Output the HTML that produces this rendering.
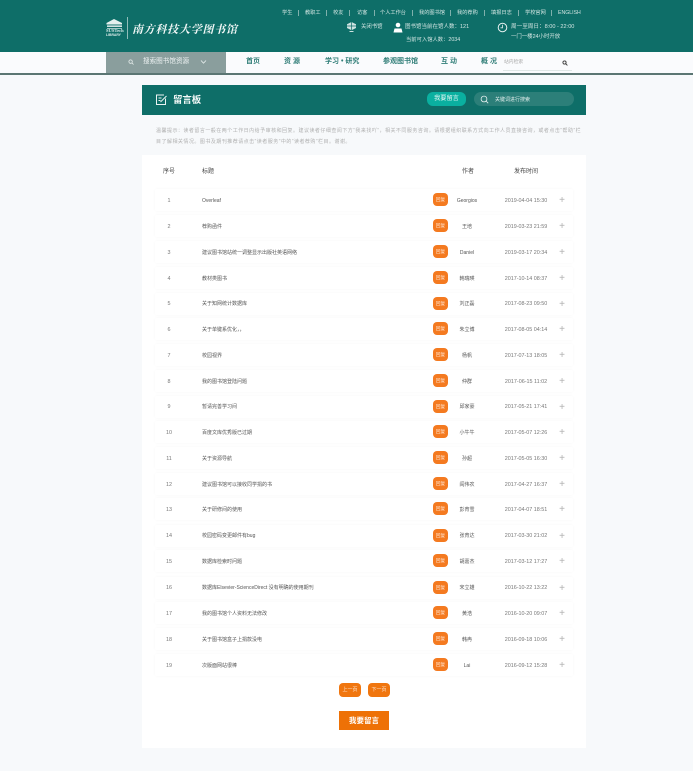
<!DOCTYPE html>
<html lang="zh-CN"><head><meta charset="utf-8"><title>留言板</title>
<style>
html,body{margin:0;padding:0}
body{width:693px;height:771px;position:relative;overflow:hidden;background:#f7f9fb;font-family:"Liberation Sans","Noto Sans CJK SC",sans-serif;color:#666}
.a{position:absolute;white-space:nowrap}
.w{color:#d3e6e3;font-size:5.2px;line-height:8px}
.sep{position:absolute;top:10px;width:1px;height:6px;background:#7fb0ac}
.nav{position:absolute;top:57px;font-size:7px;line-height:10px;font-weight:700;color:#2f7d77;white-space:nowrap}
.row{position:absolute;left:155px;width:418px;height:22px;background:#fff;box-shadow:0 0 3px rgba(20,40,60,.03);border-radius:2px}
.row span{position:absolute;top:7.800px;line-height:8px;font-size:5px;white-space:nowrap;color:#666}
.row .n{left:0;width:28px;text-align:center;color:#777;font-size:5.400px}
.row .t{left:47px;color:#555}
.row .b{left:278px;top:4px;width:15px;height:13px;line-height:13px;background:#f47a20;border-radius:4px;color:#ffe9d8;text-align:center;font-size:4.600px}
.row .u{left:282px;width:60px;text-align:center;color:#555}
.row .d{left:333px;width:76px;text-align:center;font-size:5.400px;color:#777}
.row .p{left:402px;width:10px;top:7px;text-align:center;font-size:10px;line-height:10px;color:#b0b0b0}
.th{position:absolute;top:167.500px;font-size:6px;line-height:8px;color:#444;white-space:nowrap}
.pg{position:absolute;top:683px;width:22px;height:14px;line-height:14px;background:#f0760f;border-radius:4px;color:#ffe9d8;font-size:5px;text-align:center}
.note{position:absolute;left:156px;font-size:5px;letter-spacing:.48px;line-height:8px;color:#b0b0b0;white-space:nowrap}
</style></head><body>

<div class="a" style="left:0;top:0;width:693px;height:52px;background:#0e6e68"></div>
<svg class="a" style="left:105px;top:18px" width="20" height="20" viewBox="0 0 20 20"><path d="M1.500 5 L9 1 L17 5 L17 6.500 L1.500 6.500Z" fill="#e4f0ee"/><path d="M2 7.500h15v1.300H2z" fill="#fff"/><path d="M2 10h15v1H2z" fill="#cfe3e1" opacity=".75"/></svg>
<div class="a" style="left:106px;top:28px;font-size:4.600px;line-height:5px;color:#dcecea;font-family:'Liberation Serif',serif;font-weight:700">SUSTech</div>
<div class="a" style="left:106px;top:32.500px;font-size:3.400px;line-height:4px;color:#dcecea;font-weight:700">LIBRARY</div>
<div class="a" style="left:127px;top:17px;width:1px;height:22px;background:#8fbdb9"></div>
<div class="a" style="left:132px;top:21.500px;font-size:11px;line-height:15px;letter-spacing:.75px;color:#f2f8f7;font-weight:700;font-style:italic;font-family:'Noto Serif CJK SC',serif">南方科技大学图书馆</div>

<div class="a w" style="left:282px;top:9px">学生</div><div class="sep" style="left:298px"></div>
<div class="a w" style="left:305px;top:9px">教职工</div><div class="sep" style="left:326px"></div>
<div class="a w" style="left:333px;top:9px">校友</div><div class="sep" style="left:349px"></div>
<div class="a w" style="left:357px;top:9px">访客</div><div class="sep" style="left:374px"></div>
<div class="a w" style="left:380px;top:9px">个人工作台</div><div class="sep" style="left:412px"></div>
<div class="a w" style="left:419px;top:9px">我的图书馆</div><div class="sep" style="left:450px"></div>
<div class="a w" style="left:457px;top:9px">我的荐购</div><div class="sep" style="left:484px"></div>
<div class="a w" style="left:491px;top:9px">填报日志</div><div class="sep" style="left:518px"></div>
<div class="a w" style="left:525px;top:9px">学校官网</div><div class="sep" style="left:551px"></div>
<div class="a w" style="left:558px;top:9px">ENGLISH</div>

<svg class="a" style="left:346px;top:21px" width="11" height="12" viewBox="0 0 11 12"><path d="M5.500 1 L10 3.200 L10 7 L5.500 9.300 L1 7 L1 3.200Z" fill="#cfe3e1"/><path d="M1 5h9M5.500 1v8.300" stroke="#0e6e68" stroke-width=".7"/><path d="M3.500 10.500h4" stroke="#cfe3e1"/></svg>
<div class="a w" style="left:361px;top:23px;font-size:5.400px">关闭书馆</div>
<svg class="a" style="left:393px;top:22px" width="10" height="11" viewBox="0 0 10 11"><circle cx="5" cy="3" r="2.300" fill="#fff"/><path d="M.5 10.500 L1.500 6.500 L8.500 6.500 L9.500 10.500Z" fill="#fff"/></svg>
<div class="a w" style="left:405px;top:23px;font-size:5.500px">图书馆当前在馆人数：121</div>
<div class="a w" style="left:406px;top:36px;font-size:5.300px">当前可入馆人数：2034</div>
<svg class="a" style="left:497px;top:22px" width="11" height="11" viewBox="0 0 11 11"><circle cx="5.500" cy="5.500" r="4.300" fill="none" stroke="#e6f1f0" stroke-width="1"/><path d="M5.500 2.800V5.800H3.500" fill="none" stroke="#e6f1f0" stroke-width=".8"/></svg>
<div class="a w" style="left:511px;top:23px;font-size:5.600px">周一至周日：8:00 - 22:00</div>
<div class="a w" style="left:511px;top:33px;font-size:5.400px">一门一楼24小时开放</div>

<div class="a" style="left:0;top:52px;width:693px;height:21px;background:#fafbfd"></div>
<div class="a" style="left:0;top:73px;width:693px;height:2px;background:#5b7673"></div>
<div class="a" style="left:106px;top:52px;width:120px;height:21px;background:#8a9e9d"></div>
<svg class="a" style="left:128px;top:59px" width="6" height="6" viewBox="0 0 6 6"><circle cx="2.600" cy="2.600" r="1.700" fill="none" stroke="#e8efee" stroke-width=".8"/><path d="M4 4 5.500 5.500" stroke="#e8efee" stroke-width=".8"/></svg>
<div class="a" style="left:143px;top:57px;font-size:6.600px;line-height:10px;color:#eef3f3">搜索图书馆资源</div>
<svg class="a" style="left:200px;top:59px" width="7" height="6" viewBox="0 0 7 6"><path d="M1 1.500 3.500 4.200 6 1.500" fill="none" stroke="#e8efee" stroke-width=".8"/></svg>

<div class="nav" style="left:246px">首页</div>
<div class="nav" style="left:284px">资 源</div>
<div class="nav" style="left:325px">学习 • 研究</div>
<div class="nav" style="left:383px">参观图书馆</div>
<div class="nav" style="left:441px">互 动</div>
<div class="nav" style="left:481px">概 况</div>
<div class="a" style="left:504px;top:59px;font-size:4.800px;line-height:8px;color:#aaa">站内检索</div>
<svg class="a" style="left:562px;top:60px" width="6" height="6" viewBox="0 0 6 6"><circle cx="2.500" cy="2.500" r="1.600" fill="none" stroke="#333" stroke-width=".9"/><path d="M3.800 3.800 5.400 5.400" stroke="#333" stroke-width=".9"/></svg>
<div class="a" style="left:503px;top:70px;width:69px;height:1px;background:#dfe7e6"></div>

<div class="a" style="left:142px;top:85px;width:444px;height:30px;background:#0e6e68"></div>
<svg class="a" style="left:155px;top:93px" width="13" height="13" viewBox="0 0 13 13"><path d="M10.500 5.500V11.500H1.500V2H9" fill="none" stroke="#eaf3f2" stroke-width="1"/><path d="M3.500 5h3M3.500 7.500h2M5.500 9 11.500 3" fill="none" stroke="#eaf3f2" stroke-width="1"/></svg>
<div class="a" style="left:173px;top:93px;font-size:9.400px;line-height:13px;font-weight:700;color:#f4faf9">留言板</div>
<div class="a" style="left:427px;top:92px;width:39px;height:14px;line-height:14px;border-radius:6px;background:#0ab0a0;color:#e6f8f5;font-size:6.200px;text-align:center">我要留言</div>
<div class="a" style="left:474px;top:92px;width:100px;height:14px;border-radius:7px;background:#2c7f79"></div>
<svg class="a" style="left:480px;top:95px" width="9" height="9" viewBox="0 0 9 9"><circle cx="4" cy="4" r="2.900" fill="none" stroke="#e6f1f0" stroke-width=".8"/><path d="M6 6 8.200 8.200" stroke="#e6f1f0" stroke-width=".8"/></svg>
<div class="a" style="left:495px;top:96px;font-size:5px;line-height:8px;color:#e4efee">关键词进行搜索</div>

<div class="note" style="top:127px">温馨提示：读者留言一般在两个工作日内给予审核和回复。建议读者仔细查阅下方“我来找吖”，相关不同服务咨询。请根据组织联系方式向工作人员直接咨询，或者点击“帮助”栏</div>
<div class="note" style="top:138px">目了解相关情况。图书及期刊推荐请点击“读者服务”中的“读者荐购”栏目。谢谢。</div>

<div class="a" style="left:142px;top:155px;width:444px;height:593px;background:#fff"></div>
<div class="th" style="left:163px">序号</div>
<div class="th" style="left:202px">标题</div>
<div class="th" style="left:462px">作者</div>
<div class="th" style="left:514px">发布时间</div>

<div class="row" style="top:189px"><span class="n">1</span><span class="t">Overleaf</span><span class="b">回复</span><span class="u">Georgios</span><span class="d">2019-04-04 15:30</span><span class="p">+</span></div>
<div class="row" style="top:215px"><span class="n">2</span><span class="t">荐购函件</span><span class="b">回复</span><span class="u">王培</span><span class="d">2019-03-23 21:59</span><span class="p">+</span></div>
<div class="row" style="top:241px"><span class="n">3</span><span class="t">建议图书馆站统一调整显示出版社英语网络</span><span class="b">回复</span><span class="u">Daniel</span><span class="d">2019-03-17 20:34</span><span class="p">+</span></div>
<div class="row" style="top:267px"><span class="n">4</span><span class="t">教材类图书</span><span class="b">回复</span><span class="u">韩瑞瑛</span><span class="d">2017-10-14 08:37</span><span class="p">+</span></div>
<div class="row" style="top:292.500px"><span class="n">5</span><span class="t">关于知网统计数据库</span><span class="b">回复</span><span class="u">刘正磊</span><span class="d">2017-08-23 09:50</span><span class="p">+</span></div>
<div class="row" style="top:318px"><span class="n">6</span><span class="t">关于单键系优化，，</span><span class="b">回复</span><span class="u">朱立博</span><span class="d">2017-08-05 04:14</span><span class="p">+</span></div>
<div class="row" style="top:344px"><span class="n">7</span><span class="t">校园视界</span><span class="b">回复</span><span class="u">杨帆</span><span class="d">2017-07-13 18:05</span><span class="p">+</span></div>
<div class="row" style="top:370px"><span class="n">8</span><span class="t">我的图书馆登陆问题</span><span class="b">回复</span><span class="u">仲群</span><span class="d">2017-06-15 11:02</span><span class="p">+</span></div>
<div class="row" style="top:395.500px"><span class="n">9</span><span class="t">暂请完善学习间</span><span class="b">回复</span><span class="u">邱家豪</span><span class="d">2017-05-21 17:41</span><span class="p">+</span></div>
<div class="row" style="top:421px"><span class="n">10</span><span class="t">百度文库优秀版已过期</span><span class="b">回复</span><span class="u">小牛牛</span><span class="d">2017-05-07 12:26</span><span class="p">+</span></div>
<div class="row" style="top:447px"><span class="n">11</span><span class="t">关于资源导航</span><span class="b">回复</span><span class="u">孙超</span><span class="d">2017-05-05 16:30</span><span class="p">+</span></div>
<div class="row" style="top:473px"><span class="n">12</span><span class="t">建议图书馆可以接收同学捐的书</span><span class="b">回复</span><span class="u">阎伟农</span><span class="d">2017-04-27 16:37</span><span class="p">+</span></div>
<div class="row" style="top:498px"><span class="n">13</span><span class="t">关于研修间的使用</span><span class="b">回复</span><span class="u">彭育雪</span><span class="d">2017-04-07 18:51</span><span class="p">+</span></div>
<div class="row" style="top:524.500px"><span class="n">14</span><span class="t">校园密码变更邮件有bug</span><span class="b">回复</span><span class="u">张育达</span><span class="d">2017-03-30 21:02</span><span class="p">+</span></div>
<div class="row" style="top:550px"><span class="n">15</span><span class="t">数据库检索时问题</span><span class="b">回复</span><span class="u">胡嘉杰</span><span class="d">2017-03-12 17:27</span><span class="p">+</span></div>
<div class="row" style="top:576.500px"><span class="n">16</span><span class="t">数据库Elsevier-ScienceDirect 没有明确的使用期刊</span><span class="b">回复</span><span class="u">宋立雄</span><span class="d">2016-10-22 13:22</span><span class="p">+</span></div>
<div class="row" style="top:602px"><span class="n">17</span><span class="t">我的图书馆个人资料无法修改</span><span class="b">回复</span><span class="u">黄浩</span><span class="d">2016-10-20 09:07</span><span class="p">+</span></div>
<div class="row" style="top:628px"><span class="n">18</span><span class="t">关于图书馆盒子上捐款没电</span><span class="b">回复</span><span class="u">韩冉</span><span class="d">2016-09-18 10:06</span><span class="p">+</span></div>
<div class="row" style="top:654px"><span class="n">19</span><span class="t">次版面网站很棒</span><span class="b">回复</span><span class="u">Lai</span><span class="d">2016-09-12 15:28</span><span class="p">+</span></div>

<div class="pg" style="left:339px">上一页</div>
<div class="pg" style="left:368px">下一页</div>
<div class="a" style="left:339px;top:711px;width:50px;height:19px;line-height:19px;background:#ee7106;color:#fff;font-size:7.500px;font-weight:700;text-align:center">我要留言</div>
</body></html>
